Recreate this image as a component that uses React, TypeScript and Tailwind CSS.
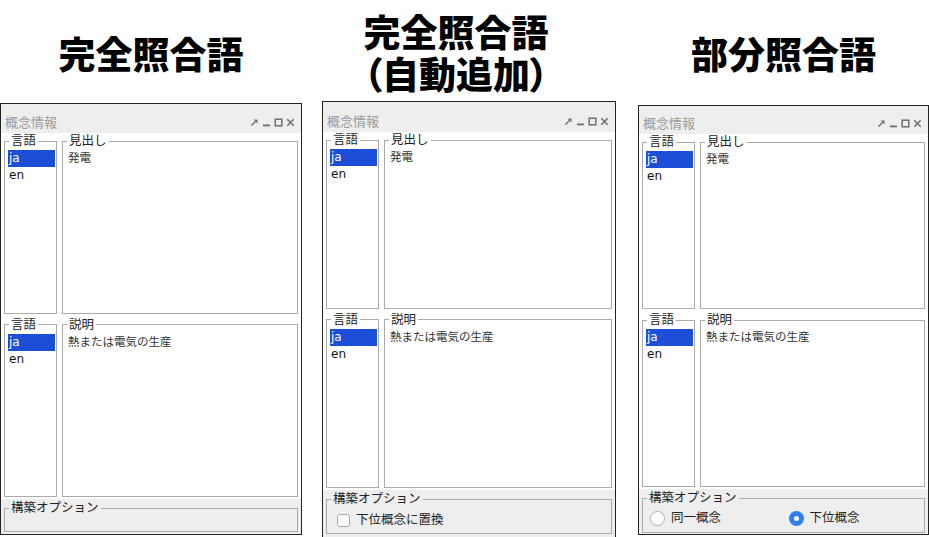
import React from 'react';

const uiFont = "font-['DejaVu_Sans','Noto_Sans_CJK_JP',sans-serif]";
const headFont = "font-['Noto_Sans_CJK_JP',sans-serif] font-black text-[37px] leading-[42px] text-black";

const TitleIcons: React.FC = () => (
  <div className="mb-[5px] flex items-center gap-[3px] text-[#6e6e6e]">
    {/* pin */}
    <svg width="9" height="9" viewBox="0 0 9 9">
      <path d="M1.5 7.5 L5.5 3.5" stroke="currentColor" strokeWidth="1.5" />
      <path d="M3.5 1.5 H7.5 V5.5 Z" fill="currentColor" />
    </svg>
    {/* minimize */}
    <svg width="9" height="9" viewBox="0 0 9 9">
      <rect x="1" y="6.5" width="7" height="1.8" fill="currentColor" />
    </svg>
    {/* maximize */}
    <svg width="9" height="9" viewBox="0 0 9 9">
      <rect x="1.2" y="1.2" width="6.6" height="6.6" fill="none" stroke="currentColor" strokeWidth="1.5" />
    </svg>
    {/* close */}
    <svg width="9" height="9" viewBox="0 0 9 9">
      <path d="M1.3 1.3 L7.7 7.7 M7.7 1.3 L1.3 7.7" stroke="currentColor" strokeWidth="1.5" />
    </svg>
  </div>
);

const Group: React.FC<{ label: string; className?: string; children?: React.ReactNode }> = ({
  label,
  className = '',
  children,
}) => (
  <fieldset className={`min-w-0 border border-[#ababab] pl-[3px] pr-[1px] pb-[2px] ${className}`}>
    <legend className="ml-[1px] px-[2px] text-[12.5px] leading-[16px] text-[#222]">{label}</legend>
    {children}
  </fieldset>
);

const LangList: React.FC = () => (
  <Group label="言語" className="w-[53px] shrink-0 bg-white">
    <div className="mt-[1px] bg-[#1d4ed8] px-[1px] text-[12px] leading-[17px] text-white">ja</div>
    <div className="px-[1px] text-[12px] leading-[17px] text-[#111]">en</div>
  </Group>
);

const TextBox: React.FC<{ label: string; value: string }> = ({ label, value }) => (
  <Group label={label} className="flex-1 bg-white">
    <div className="mt-[1px] pl-[2px] text-[11.5px] leading-[17px] text-[#333]">{value}</div>
  </Group>
);

type PanelProps = {
  height: string;
  titleHeight: string;
  optionsHeight: string;
  optionsBox: string;
  children?: React.ReactNode;
};

const Panel: React.FC<PanelProps> = ({ height, titleHeight, optionsHeight, optionsBox, children }) => (
  <div className={`flex flex-col border border-[#222] bg-white ${uiFont} ${height}`}>
    {/* title bar */}
    <div className={`flex shrink-0 items-end justify-between bg-[#eeeeee] pl-[4px] pr-[6px] pb-[1px] ${titleHeight}`}>
      <span className="text-[13px] leading-[18px] text-[#9b9b9b]">概念情報</span>
      <TitleIcons />
    </div>

    {/* 見出し / 説明 */}
    <div className="flex min-h-0 flex-1 flex-col gap-[3px] px-[3px] pb-[2px]">
      <div className="flex min-h-0 flex-1 gap-[5px]">
        <LangList />
        <TextBox label="見出し" value="発電" />
      </div>
      <div className="flex min-h-0 flex-1 gap-[5px]">
        <LangList />
        <TextBox label="説明" value="熱または電気の生産" />
      </div>
    </div>

    {/* 構築オプション */}
    <div className={`shrink-0 bg-[#eeeeee] px-[3px] pt-[1px] ${optionsHeight}`}>
      <Group label="構築オプション" className={`bg-[#eeeeee] ${optionsBox}`}>
        {children}
      </Group>
    </div>
  </div>
);

const Radio: React.FC<{ checked?: boolean; label: string }> = ({ checked, label }) => (
  <div className="flex items-center gap-[6px] pl-[4px]">
    {checked ? (
      <span className="flex h-[15px] w-[15px] items-center justify-center rounded-full bg-[#2f7ff2]">
        <span className="h-[5px] w-[5px] rounded-full bg-white" />
      </span>
    ) : (
      <span className="h-[15px] w-[15px] rounded-full border border-[#ababab] bg-white" />
    )}
    <span className="text-[12.5px] leading-[18px] text-[#222]">{label}</span>
  </div>
);

const App: React.FC = () => {
  return (
    <div className="flex h-[537px] w-[929px] overflow-hidden bg-white">
      {/* 完全照合語 */}
      <div className="flex w-[302px] shrink-0 flex-col">
        <div className="flex h-[103px] shrink-0 items-center justify-center pt-[3px]">
          <h1 className={headFont}>完全照合語</h1>
        </div>
        <Panel height="h-[432px]" titleHeight="h-[29px]" optionsHeight="h-[35px]" optionsBox="h-[32px]" />
      </div>

      {/* 完全照合語（自動追加） */}
      <div className="ml-[20px] flex w-[294px] shrink-0 flex-col">
        <div className="flex h-[101px] shrink-0 flex-col items-center justify-center pr-[26px] pt-[3px]">
          <h1 className={headFont}>
            完全照合語
            <br />
            <span className="[font-feature-settings:'palt']">（自動追加）</span>
          </h1>
        </div>
        <Panel height="h-[438px] shrink-0" titleHeight="h-[30px]" optionsHeight="h-[48px]" optionsBox="h-[43px]">
          <div className="flex items-center gap-[6px] pl-[7px] pt-[4px]">
            <span className="h-[13px] w-[13px] rounded-[3px] border border-[#a8a8a8] bg-white" />
            <span className="text-[12.5px] leading-[18px] text-[#222]">下位概念に置換</span>
          </div>
        </Panel>
      </div>

      {/* 部分照合語 */}
      <div className="ml-[22px] flex w-[291px] shrink-0 flex-col">
        <div className="flex h-[105px] shrink-0 items-center justify-center">
          <h1 className={headFont}>部分照合語</h1>
        </div>
        <Panel height="h-[430px]" titleHeight="h-[28px]" optionsHeight="h-[45px]" optionsBox="h-[43px]">
          <div className="grid grid-cols-2 pt-[3px]">
            <Radio label="同一概念" />
            <Radio checked label="下位概念" />
          </div>
        </Panel>
      </div>
    </div>
  );
};

export default App;
